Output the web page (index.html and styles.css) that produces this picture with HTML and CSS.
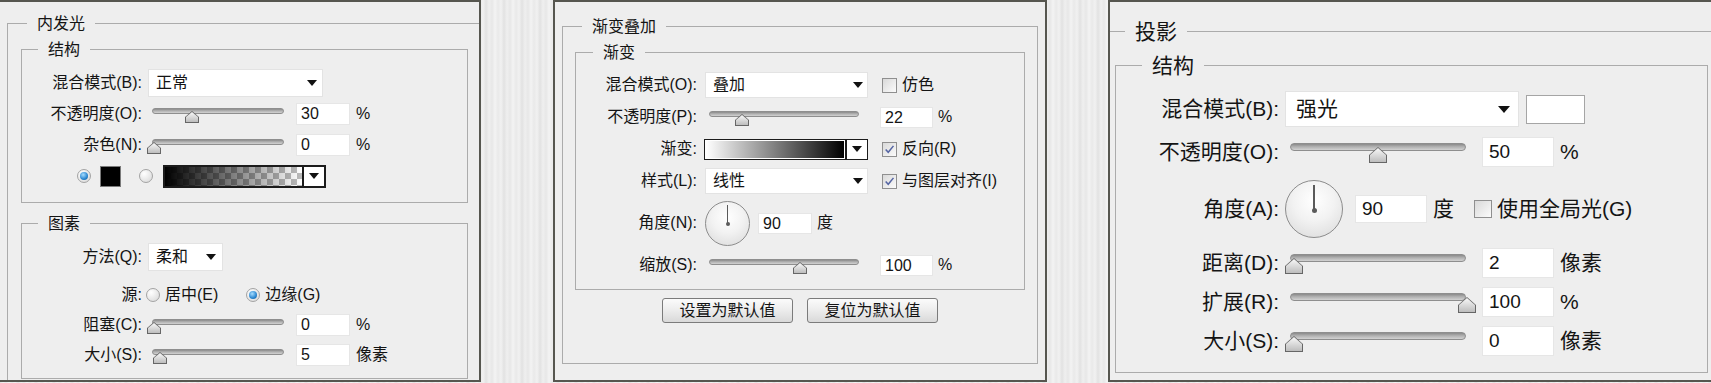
FILE: index.html
```html
<!DOCTYPE html>
<html lang="zh-CN">
<head>
  <meta charset="UTF-8" />
  <title>图层样式</title>
  <link rel="stylesheet" href="styles.css">
</head>
<body>
  <!-- 内发光 -->
  <section class="panel p1">
    <fieldset class="grp outer">
      <legend>内发光</legend>
      <div class="grp-body">
        <fieldset class="grp inner">
          <legend>结构</legend>
          <div class="rows">
            <div class="row">
              <span class="lbl">混合模式(B):</span>
              <div class="select blend"><span>正常</span><i class="caret"></i></div>
            </div>
            <div class="row">
              <span class="lbl">不透明度(O):</span>
              <div class="slider"><i class="track"></i><i class="thumb" style="left: 38px"></i></div>
              <span class="field">30</span>
              <span class="unit">%</span>
            </div>
            <div class="row">
              <span class="lbl">杂色(N):</span>
              <div class="slider"><i class="track"></i><i class="thumb" style="left: 0px"></i></div>
              <span class="field">0</span>
              <span class="unit">%</span>
            </div>
            <div class="row color-row">
              <i class="radio on"></i>
              <span class="swatch"></span>
              <i class="radio"></i>
              <div class="gpick fade"><span class="gfill"></span><span class="gdrop"><i class="caret"></i></span></div>
            </div>
          </div>
        </fieldset>

        <fieldset class="grp inner">
          <legend>图素</legend>
          <div class="rows">
            <div class="row">
              <span class="lbl">方法(Q):</span>
              <div class="select method"><span>柔和</span><i class="caret"></i></div>
            </div>
            <div class="row source">
              <span class="lbl">源:</span>
              <span class="opt"><i class="radio"></i>居中(E)</span>
              <span class="opt"><i class="radio on"></i>边缘(G)</span>
            </div>
            <div class="row">
              <span class="lbl">阻塞(C):</span>
              <div class="slider"><i class="track"></i><i class="thumb" style="left: 0px"></i></div>
              <span class="field">0</span>
              <span class="unit">%</span>
            </div>
            <div class="row">
              <span class="lbl">大小(S):</span>
              <div class="slider"><i class="track"></i><i class="thumb" style="left: 6px"></i></div>
              <span class="field">5</span>
              <span class="unit">像素</span>
            </div>
          </div>
        </fieldset>
      </div>
    </fieldset>
  </section>

  <!-- 渐变叠加 -->
  <section class="panel p2">
    <fieldset class="grp outer">
      <legend>渐变叠加</legend>
      <div class="grp-body">
        <fieldset class="grp inner">
          <legend>渐变</legend>
          <div class="rows">
            <div class="row">
              <span class="lbl">混合模式(O):</span>
              <div class="select"><span>叠加</span><i class="caret"></i></div>
              <i class="check"></i>
              <span>仿色</span>
            </div>
            <div class="row">
              <span class="lbl">不透明度(P):</span>
              <div class="slider"><i class="track"></i><i class="thumb" style="left: 31px"></i></div>
              <span class="field">22</span>
              <span class="unit">%</span>
            </div>
            <div class="row">
              <span class="lbl">渐变:</span>
              <div class="gpick mono"><span class="gfill"></span><span class="gdrop"><i class="caret"></i></span></div>
              <i class="check"><svg viewBox="0 0 13 13" width="11" height="11"><path d="M2 6.5 L5 9.8 L11.2 2.2" fill="none" stroke="#5565a3" stroke-width="1.8"/></svg></i>
              <span>反向(R)</span>
            </div>
            <div class="row">
              <span class="lbl">样式(L):</span>
              <div class="select"><span>线性</span><i class="caret"></i></div>
              <i class="check"><svg viewBox="0 0 13 13" width="11" height="11"><path d="M2 6.5 L5 9.8 L11.2 2.2" fill="none" stroke="#5565a3" stroke-width="1.8"/></svg></i>
              <span>与图层对齐(I)</span>
            </div>
            <div class="row dial-row">
              <span class="lbl">角度(N):</span>
              <div class="dial"><i class="needle"></i><i class="hub"></i></div>
              <span class="field">90</span>
              <span class="unit">度</span>
            </div>
            <div class="row">
              <span class="lbl">缩放(S):</span>
              <div class="slider"><i class="track"></i><i class="thumb" style="left: 89px"></i></div>
              <span class="field">100</span>
              <span class="unit">%</span>
            </div>
          </div>
        </fieldset>
        <div class="btns">
          <button class="btn">设置为默认值</button>
          <button class="btn">复位为默认值</button>
        </div>
      </div>
    </fieldset>
  </section>

  <!-- 投影 -->
  <section class="panel p3">
    <fieldset class="grp outer">
      <legend>投影</legend>
      <div class="grp-body">
        <fieldset class="grp inner">
          <legend>结构</legend>
          <div class="rows">
            <div class="row">
              <span class="lbl">混合模式(B):</span>
              <div class="select"><span>强光</span><i class="caret"></i></div>
              <span class="swatch white"></span>
            </div>
            <div class="row">
              <span class="lbl">不透明度(O):</span>
              <div class="slider"><i class="track"></i><i class="thumb" style="left: 84px"></i></div>
              <span class="field">50</span>
              <span class="unit">%</span>
            </div>
            <div class="row dial-row">
              <span class="lbl">角度(A):</span>
              <div class="dial"><i class="needle"></i><i class="hub"></i></div>
              <span class="field">90</span>
              <span class="unit">度</span>
              <i class="check"></i>
              <span>使用全局光(G)</span>
            </div>
            <div class="row">
              <span class="lbl">距离(D):</span>
              <div class="slider"><i class="track"></i><i class="thumb" style="left: 0px"></i></div>
              <span class="field">2</span>
              <span class="unit">像素</span>
            </div>
            <div class="row close">
              <span class="lbl">扩展(R):</span>
              <div class="slider"><i class="track"></i><i class="thumb" style="left: 173px"></i></div>
              <span class="field">100</span>
              <span class="unit">%</span>
            </div>
            <div class="row close">
              <span class="lbl">大小(S):</span>
              <div class="slider"><i class="track"></i><i class="thumb" style="left: 0px"></i></div>
              <span class="field">0</span>
              <span class="unit">像素</span>
            </div>
          </div>
        </fieldset>
      </div>
    </fieldset>
  </section>
</body>
</html>
```

FILE: styles.css
```css
* {
  box-sizing: border-box;
}

body {
  margin: 0;
  height: 383px;
  overflow: hidden;
  display: flex;
  align-items: flex-start;
  font-family: "Liberation Sans", "Noto Sans CJK SC", sans-serif;
  font-size: 16px;
  line-height: 20px;
  color: #141414;
  background: repeating-linear-gradient(90deg, #e2e2e2 0, #efefef 3px, #e7e7e7 6px, #f3f3f3 9px, #e9e9e9 12px, #f1f1f1 15px, #e2e2e2 18px);
}

.panel {
  flex: none;
  height: 382px;
  overflow: hidden;
  background: #eeeeee;
  border: 2px solid #56564f;
}

.p1 { width: 481px; border-left: 0; }
.p2 { width: 494px; margin-left: 72px; }
.p3 { width: 603px; margin-left: 61px; border-right: 0; font-size: 21px; line-height: 26px; }

/* group boxes */
.grp {
  margin: 0;
  padding: 0;
  min-width: 0;
  border: 1px solid #ababab;
}

.grp > legend {
  padding: 0 10px;
  line-height: 21px;
}

.p3 .grp > legend {
  line-height: 27px;
}

.p1 .outer { width: 500px; margin: 11px 0 0 7px; padding-bottom: 30px; }
.p1 .outer > legend { margin-left: 19px; }
.p1 .outer > .grp-body { padding-left: 13px; }
.p1 .inner { width: 447px; margin-top: 5px; }
.p1 .inner + .inner { margin-top: 10px; }
.p1 .inner > legend { margin-left: 16px; }
.p1 .rows { padding: 9px 0 12px; gap: 3px; }
.p1 .inner + .inner .rows { padding-bottom: 9px; gap: 2px; }

.p2 .outer { width: 476px; margin: 14px 0 0 7px; padding-bottom: 40px; }
.p2 .outer > legend { margin-left: 19px; }
.p2 .outer > .grp-body { padding-left: 12px; }
.p2 .inner { width: 450px; margin-top: 5px; }
.p2 .inner > legend { margin-left: 17px; }
.p2 .rows { padding: 8px 0 10px; gap: 4px; }

.p3 .outer { width: 620px; margin-top: 16px; border-left: 0; padding-bottom: 30px; }
.p3 .outer > legend { margin-left: 15px; }
.p3 .outer > .grp-body { padding-left: 5px; }
.p3 .inner { width: 593px; margin-top: 7px; }
.p3 .inner > legend { margin-left: 26px; }
.p3 .rows { padding: 12px 0 13px; gap: 7px; }

/* rows */
.rows {
  display: flex;
  flex-direction: column;
}

.row {
  display: flex;
  align-items: center;
  height: 28px;
  white-space: nowrap;
}

.p2 .dial-row { height: 48px; }
.p3 .row { height: 36px; }
.p3 .dial-row { height: 58px; margin-top: 3px; }
.p3 .row.close { margin-top: -4px; }

.lbl {
  flex: none;
  text-align: right;
}

.p1 .lbl { width: 120px; }
.p2 .lbl { width: 121px; }
.p3 .lbl { width: 163px; }

/* dropdowns */
.select {
  flex: none;
  display: flex;
  align-items: center;
  justify-content: space-between;
  height: 28px;
  margin-left: 6px;
  padding: 0 5px 0 7px;
  background: #fff;
  border: 1px solid #e3e3e3;
}

.select.blend { width: 175px; }
.select.method { width: 75px; padding-right: 6px; }
.p2 .select { width: 163px; height: 26px; margin-left: 8px; padding-right: 4px; }
.p3 .select { width: 234px; height: 36px; padding: 0 8px 0 10px; }

.caret {
  width: 0;
  height: 0;
  border-left: 5px solid transparent;
  border-right: 5px solid transparent;
  border-top: 6px solid #111;
}

.p3 .caret {
  border-left-width: 6px;
  border-right-width: 6px;
  border-top-width: 7px;
}

/* sliders */
.slider {
  flex: none;
  position: relative;
  width: 143px;
  height: 16px;
  margin-left: 5px;
}

.track {
  position: absolute;
  left: 5px;
  right: 6px;
  top: 2px;
  height: 6px;
  border-radius: 3px;
  border: 1px solid #8e8e8e;
  background: linear-gradient(#8a8a8a, #b0b0b0 45%, #d2d2d2);
}

.thumb {
  position: absolute;
  top: 5px;
  width: 14px;
  height: 12px;
  background: #666;
  clip-path: polygon(50% 0, 100% 50%, 100% 100%, 0 100%, 0 50%);
}

.thumb::after {
  content: "";
  position: absolute;
  inset: 1px;
  background: linear-gradient(#f8f8f8, #bdbdbd);
  clip-path: polygon(50% 0, 100% 50%, 100% 100%, 0 100%, 0 50%);
}

.p2 .slider { width: 160px; margin-left: 7px; }
.p2 .track { right: 5px; }

.p3 .slider { width: 187px; height: 22px; margin-left: 6px; }
.p3 .track { top: 2px; height: 8px; border-radius: 4px; }
.p3 .thumb { top: 6px; width: 18px; height: 16px; }

/* number fields */
.field {
  flex: none;
  width: 54px;
  height: 22px;
  margin-left: 6px;
  padding-left: 4px;
  line-height: 20px;
  background: #fff;
  border: 1px solid #e6e6e6;
}

.p2 .field { width: 53px; height: 21px; margin-left: 16px; line-height: 19px; }
.p2 .dial + .field { width: 54px; margin-left: 8px; }

.p3 .field { width: 72px; height: 30px; margin-left: 10px; padding-left: 6px; font-size: 19px; line-height: 28px; }
.p3 .dial + .field { height: 28px; margin-left: 12px; line-height: 26px; }

.unit { margin-left: 6px; }
.p2 .unit { margin-left: 5px; }

/* checkboxes and radios */
.check {
  flex: none;
  display: flex;
  align-items: center;
  justify-content: center;
  width: 15px;
  height: 15px;
  margin: 0 5px 0 14px;
  border: 1px solid #8f8f8f;
  background: linear-gradient(135deg, #d9d9d9, #fbfbfb);
}

.p3 .check { width: 18px; height: 18px; margin: 0 5px 0 20px; }

.radio {
  flex: none;
  display: flex;
  align-items: center;
  justify-content: center;
  width: 14px;
  height: 14px;
  border-radius: 50%;
  border: 1px solid #a3a3a3;
  background: radial-gradient(circle at 35% 30%, #ffffff, #dedede 80%);
}

.radio.on::after {
  content: "";
  width: 8px;
  height: 8px;
  border-radius: 50%;
  background: radial-gradient(circle at 40% 35%, #a6ddff, #2a86d0 60%, #135890);
}

.color-row { padding-left: 55px; }
.color-row .swatch + .radio { margin-left: 18px; }

.swatch {
  flex: none;
  width: 21px;
  height: 21px;
  margin: 0 0 0 9px;
  background: #000;
  border: 1px solid #7a7a7a;
}

.swatch.white {
  width: 59px;
  height: 29px;
  margin-left: 7px;
  background: #fff;
  border-color: #a5a5a5;
}

.opt {
  display: flex;
  align-items: center;
  margin-left: 4px;
}

.opt + .opt { margin-left: 28px; }
.opt .radio { margin-right: 5px; }
.source { margin-top: 8px; }

/* gradient pickers */
.gpick {
  flex: none;
  display: flex;
  border: 2px solid #1b1b1b;
  background: #fff;
}

.gfill { flex: 1; }

.gdrop {
  flex: none;
  display: flex;
  align-items: center;
  justify-content: center;
  width: 22px;
  border-left: 2px solid #1b1b1b;
  background: #fff;
}

.fade { width: 163px; height: 23px; margin-left: 10px; }
.fade .gfill {
  background: linear-gradient(90deg, #000, rgba(0, 0, 0, 0)), repeating-conic-gradient(#bcbcbc 0 25%, #fff 0 50%) 0 0 / 12px 12px;
}

.mono { width: 164px; height: 21px; margin-left: 7px; border-width: 1px; }
.mono .gfill { border: 1px solid #fff; background: linear-gradient(90deg, #fff, #000); }
.mono .gdrop { border-left-width: 2px; }

/* angle dial */
.dial {
  flex: none;
  display: flex;
  flex-direction: column;
  align-items: center;
  width: 45px;
  height: 45px;
  margin-left: 8px;
  border-radius: 50%;
  border: 1px solid #8c8c8c;
  background: radial-gradient(circle at 50% 35%, #ffffff 0, #f2f2f2 45%, #d8d8d8 100%);
}

.needle {
  width: 1px;
  height: 19px;
  margin-top: 3px;
  background: #5a5a5a;
}

.hub {
  width: 4px;
  height: 4px;
  margin-top: -2px;
  border-radius: 50%;
  background: #5a5a5a;
}

.p3 .dial { width: 58px; height: 58px; margin-left: 6px; }
.p3 .needle { width: 2px; height: 25px; margin-top: 4px; }
.p3 .hub { width: 5px; height: 5px; }

/* buttons */
.btns {
  display: flex;
  justify-content: center;
  gap: 14px;
  width: 450px;
  margin-top: 8px;
}

.btn {
  width: 131px;
  height: 25px;
  padding: 0;
  font: inherit;
  line-height: 23px;
  color: #141414;
  border: 1px solid #7b7b7b;
  border-radius: 3px;
  background: linear-gradient(#fbfbfb, #ececec 50%, #d9d9d9);
}
```
